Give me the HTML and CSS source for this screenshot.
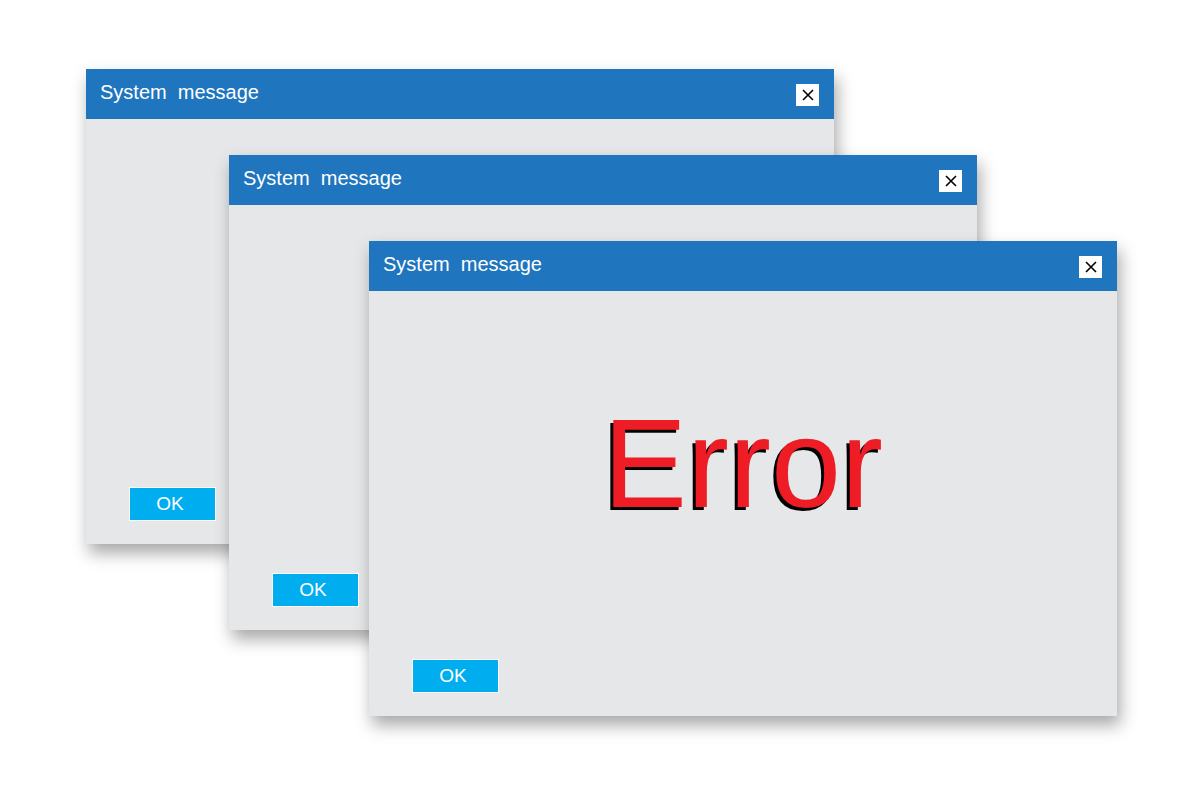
FILE: index.html
```html
<!DOCTYPE html>
<html lang="en">
  <head>
    <meta charset="UTF-8" />
    <title>System message</title>
    <link rel="stylesheet" href="styles.css">
  </head>
  <body>
    <main class="desktop">
      <section class="window win1">
        <header class="titleBar">
          <span class="title">System&nbsp; message</span>
          <button class="closeBtn">
            <svg viewBox="0 0 12 12" width="12" height="12"><path d="M1 1 L11 11 M11 1 L1 11" /></svg>
          </button>
        </header>
        <div class="content"></div>
        <footer class="actions"><button class="okBtn">OK</button></footer>
      </section>
      <section class="window win2">
        <header class="titleBar">
          <span class="title">System&nbsp; message</span>
          <button class="closeBtn">
            <svg viewBox="0 0 12 12" width="12" height="12"><path d="M1 1 L11 11 M11 1 L1 11" /></svg>
          </button>
        </header>
        <div class="content"></div>
        <footer class="actions"><button class="okBtn">OK</button></footer>
      </section>
      <section class="window win3">
        <header class="titleBar">
          <span class="title">System&nbsp; message</span>
          <button class="closeBtn">
            <svg viewBox="0 0 12 12" width="12" height="12"><path d="M1 1 L11 11 M11 1 L1 11" /></svg>
          </button>
        </header>
        <div class="content">
          <h1 class="errorText">Error</h1>
        </div>
        <footer class="actions"><button class="okBtn">OK</button></footer>
      </section>
    </main>
  </body>
</html>
```

FILE: styles.css
```css
* {
  box-sizing: border-box;
}
body {
  margin: 0;
  background: #ffffff;
  font-family: "Liberation Sans", Arial, sans-serif;
}
.desktop {
  position: relative;
  width: 1200px;
  height: 800px;
  overflow: hidden;
}
.window {
  position: absolute;
  width: 748px;
  height: 475px;
  background-color: #e6e7e8;
  display: flex;
  flex-direction: column;
  box-shadow: 3px 9px 16px rgba(0, 0, 0, 0.35);
}
.win1 {
  left: 86px;
  top: 69px;
}
.win2 {
  left: 229px;
  top: 155px;
}
.win3 {
  left: 369px;
  top: 241px;
}
.titleBar {
  height: 50px;
  background-color: #1f75be;
  display: flex;
  align-items: center;
  justify-content: space-between;
  padding: 0 15px 0 14px;
}
.title {
  color: #ffffff;
  font-size: 20px;
  padding-bottom: 3px;
}
.closeBtn {
  width: 23px;
  height: 22px;
  margin-top: 2px;
  border: none;
  padding: 0;
  background: #ffffff;
  display: flex;
  align-items: center;
  justify-content: center;
  cursor: pointer;
}
.closeBtn svg {
  stroke: #000000;
  stroke-width: 1.6;
  fill: none;
}
.content {
  flex: 1;
  display: flex;
  justify-content: center;
  align-items: flex-start;
}
.errorText {
  margin: 110px 0 0;
  font-size: 126px;
  font-weight: normal;
  line-height: 1;
  color: #ee1c25;
  text-shadow: -3px 3px 0 #000000;
}
.actions {
  padding: 0 0 23px 43px;
}
.okBtn {
  width: 87px;
  height: 34px;
  border: 1px solid #ffffff;
  padding: 0 5px 0 0;
  background-color: #00aeef;
  color: #ffffff;
  font-family: "Liberation Sans", Arial, sans-serif;
  font-size: 19px;
  cursor: pointer;
}
```
